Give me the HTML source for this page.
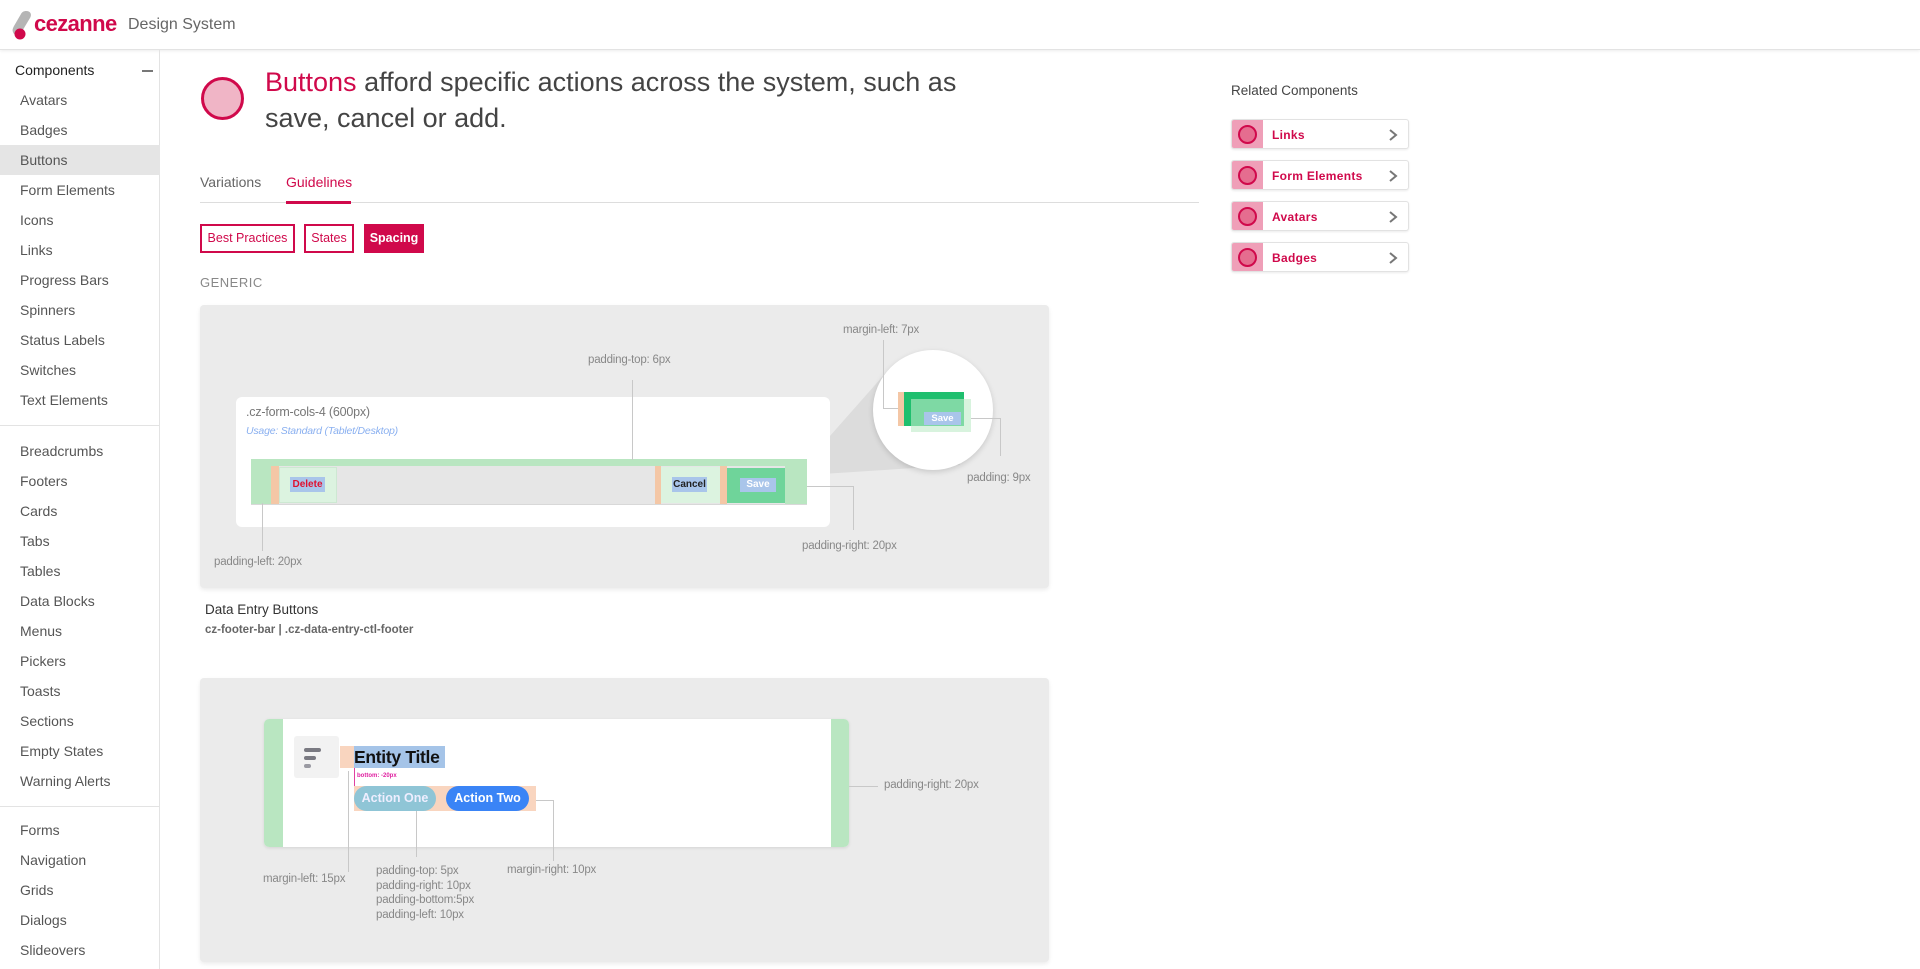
<!DOCTYPE html>
<html><head><meta charset="utf-8"><style>
*{margin:0;padding:0;box-sizing:border-box}
body{width:1920px;height:969px;overflow:hidden;background:#fff;font-family:"Liberation Sans",sans-serif;color:#444;position:relative}
.a{position:absolute}
.hdr{left:0;top:0;width:1920px;height:50px;border-bottom:1px solid #e3e3e3;box-shadow:0 1px 3px rgba(0,0,0,.08);background:#fff}
.side{left:0;top:50px;width:160px;height:919px;border-right:1px solid #e3e3e3}
.si{position:absolute;left:20px;font-size:14px;color:#555}
.sep{position:absolute;left:0;width:160px;height:1px;background:#e3e3e3}
.lbl{position:absolute;font-size:11.5px;color:#888;white-space:nowrap;letter-spacing:-.2px}
.ln{position:absolute;background:#c8c8c8}
.pill{position:absolute;top:224px;height:29px;border:2px solid #d0094b;color:#d0094b;font-size:12.5px;line-height:25px;text-align:center}
.rc{position:absolute;left:1231px;width:178px;height:30px;border:1px solid #e2e2e2;border-radius:3px;box-shadow:0 1px 2px rgba(0,0,0,.08);background:#fff;overflow:hidden}
.rc .l{position:absolute;left:0;top:0;width:31px;height:30px;background:#ef9fb8}
.rc .c{position:absolute;left:6px;top:5px;width:19px;height:19px;border-radius:50%;background:#e56d8f;border:2px solid #d0094b}
.rc .t{position:absolute;left:40px;top:8px;font-size:12px;color:#d0094b;font-weight:bold;letter-spacing:.3px}
.rc svg{position:absolute;left:155px;top:8px}
</style></head><body>
<div class="a hdr">
 <svg class="a" style="left:11px;top:10px" width="22" height="30" viewBox="0 0 22 30"><path d="M15 1 C20 1 21 5 19 8 L10 23 C8 26 3 26 2 22 C1 20 2 18 3 16 L10 4 C11 2 13 1 15 1Z" fill="#b5b5b5"/><circle cx="9" cy="24" r="5.5" fill="#d0094b"/></svg>
 <div class="a" style="left:34px;top:11px;font-size:22px;font-weight:bold;color:#d0094b;letter-spacing:-.6px">cezanne</div>
 <div class="a" style="left:128px;top:16px;font-size:16px;color:#666">Design System</div>
</div>
<div class="a side">
 <div class="a" style="left:15px;top:12px;font-size:14px;color:#222">Components</div>
 <div class="a" style="left:142px;top:20px;width:11px;height:2px;background:#777"></div>
 <div class="a" style="left:0;top:95px;width:160px;height:30px;background:#e5e5e5"></div>
 <div class="si" style="top:42px">Avatars</div>
 <div class="si" style="top:72px">Badges</div>
 <div class="si" style="top:102px">Buttons</div>
 <div class="si" style="top:132px">Form Elements</div>
 <div class="si" style="top:162px">Icons</div>
 <div class="si" style="top:192px">Links</div>
 <div class="si" style="top:222px">Progress Bars</div>
 <div class="si" style="top:252px">Spinners</div>
 <div class="si" style="top:282px">Status Labels</div>
 <div class="si" style="top:312px">Switches</div>
 <div class="si" style="top:342px">Text Elements</div>
 <div class="sep" style="top:375px"></div>
 <div class="si" style="top:393px">Breadcrumbs</div>
 <div class="si" style="top:423px">Footers</div>
 <div class="si" style="top:453px">Cards</div>
 <div class="si" style="top:483px">Tabs</div>
 <div class="si" style="top:513px">Tables</div>
 <div class="si" style="top:543px">Data Blocks</div>
 <div class="si" style="top:573px">Menus</div>
 <div class="si" style="top:603px">Pickers</div>
 <div class="si" style="top:633px">Toasts</div>
 <div class="si" style="top:663px">Sections</div>
 <div class="si" style="top:693px">Empty States</div>
 <div class="si" style="top:723px">Warning Alerts</div>
 <div class="sep" style="top:756px"></div>
 <div class="si" style="top:772px">Forms</div>
 <div class="si" style="top:802px">Navigation</div>
 <div class="si" style="top:832px">Grids</div>
 <div class="si" style="top:862px">Dialogs</div>
 <div class="si" style="top:892px">Slideovers</div>
</div>

<div class="a" style="left:201px;top:77px;width:43px;height:43px;border-radius:50%;background:#f0b5c6;border:3.5px solid #d0094b"></div>
<div class="a" style="left:265px;top:64px;width:720px;font-size:27px;line-height:36px;color:#444"><span style="color:#d0094b">Buttons</span> afford specific actions across the system, such as save, cancel or add.</div>

<div class="a" style="left:200px;top:174px;font-size:14px;color:#666">Variations</div>
<div class="a" style="left:286px;top:174px;font-size:14px;color:#d0094b">Guidelines</div>
<div class="a" style="left:200px;top:202px;width:999px;height:1px;background:#ddd"></div>
<div class="a" style="left:286px;top:201px;width:65px;height:3px;background:#d0094b"></div>

<div class="pill" style="left:200px;width:95px">Best Practices</div>
<div class="pill" style="left:304px;width:50px">States</div>
<div class="pill" style="left:364px;width:60px;background:#d0094b;color:#fff;font-weight:bold">Spacing</div>
<div class="a" style="left:200px;top:275px;font-size:13px;color:#888;letter-spacing:.5px">GENERIC</div>

<div class="a" style="left:200px;top:305px;width:849px;height:283px;background:#ebebeb;border-radius:4px;box-shadow:0 2px 4px rgba(0,0,0,.08)"></div>
<svg class="a" style="left:0;top:0" width="1100" height="600"><polygon points="807,462 890,368 915,380 960,465 807,475" fill="#dcdcdc"/></svg>
<div class="a" style="left:236px;top:397px;width:594px;height:130px;background:#fff;border-radius:6px"></div>
<div class="lbl" style="left:246px;top:405px;font-size:12.5px;color:#777">.cz-form-cols-4 (600px)</div>
<div class="lbl" style="left:246px;top:425px;font-size:10.5px;color:#8ab0f0;font-style:italic">Usage: Standard (Tablet/Desktop)</div>
<div class="a" style="left:251px;top:459px;width:556px;height:46px;background:#e6e6e6;border:1px solid #d8d8d8"></div>
<div class="a" style="left:251px;top:459px;width:556px;height:7px;background:#b9e6c1"></div>
<div class="a" style="left:251px;top:466px;width:20px;height:38px;background:#b9e6c1"></div>
<div class="a" style="left:271px;top:466px;width:8px;height:38px;background:#f4c7a6"></div>
<div class="a" style="left:279px;top:467px;width:58px;height:36px;background:#dcf3e0;border:1px solid #cde8d2"></div>
<div class="a" style="left:290px;top:477px;width:35px;height:15px;background:#a9c5ea;color:#e0102f;font-size:10px;font-weight:bold;text-align:center;line-height:15px">Delete</div>
<div class="a" style="left:655px;top:466px;width:6px;height:38px;background:#f4c7a6"></div>
<div class="a" style="left:661px;top:467px;width:59px;height:36px;background:#dcf3e0"></div>
<div class="a" style="left:672px;top:477px;width:35px;height:15px;background:#a9c5ea;color:#222;font-size:10px;font-weight:bold;text-align:center;line-height:15px">Cancel</div>
<div class="a" style="left:720px;top:466px;width:7px;height:38px;background:#f4c7a6"></div>
<div class="a" style="left:727px;top:468px;width:58px;height:35px;background:#6fd49a"></div>
<div class="a" style="left:740px;top:478px;width:36px;height:14px;background:#a9c5ea;color:#fff;font-size:10px;font-weight:bold;text-align:center;line-height:14px">Save</div>
<div class="a" style="left:785px;top:466px;width:22px;height:38px;background:#b9e6c1"></div>

<div class="a" style="left:873px;top:350px;width:120px;height:120px;border-radius:50%;background:#fff;box-shadow:0 2px 6px rgba(0,0,0,.15)"></div>
<div class="a" style="left:898px;top:392px;width:6px;height:34px;background:#f4c7a6"></div>
<div class="a" style="left:904px;top:392px;width:60px;height:34px;background:#1fbf6e"></div>
<div class="a" style="left:911px;top:399px;width:60px;height:33px;background:rgba(190,235,200,.6)"></div>
<div class="a" style="left:924px;top:412px;width:37px;height:13px;background:#a9c5ea;color:#fff;font-size:9.5px;font-weight:bold;text-align:center;line-height:13px">Save</div>

<div class="ln" style="left:632px;top:380px;width:1px;height:80px"></div>
<div class="lbl" style="left:588px;top:354px">padding-top: 6px</div>
<div class="ln" style="left:883px;top:340px;width:1px;height:68px"></div>
<div class="ln" style="left:883px;top:408px;width:15px;height:1px"></div>
<div class="lbl" style="left:843px;top:324px">margin-left: 7px</div>
<div class="ln" style="left:971px;top:418px;width:30px;height:1px"></div>
<div class="ln" style="left:1000px;top:418px;width:1px;height:38px"></div>
<div class="lbl" style="left:967px;top:472px">padding: 9px</div>
<div class="ln" style="left:807px;top:486px;width:46px;height:1px"></div>
<div class="ln" style="left:853px;top:486px;width:1px;height:44px"></div>
<div class="lbl" style="left:802px;top:540px">padding-right: 20px</div>
<div class="ln" style="left:262px;top:503px;width:1px;height:48px"></div>
<div class="lbl" style="left:214px;top:556px">padding-left: 20px</div>

<div class="a" style="left:205px;top:602px;font-size:13.5px;color:#333">Data Entry Buttons</div>
<div class="a" style="left:205px;top:624px;font-size:11.5px;color:#666;font-weight:bold">cz-footer-bar | .cz-data-entry-ctl-footer</div>

<div class="a" style="left:200px;top:678px;width:849px;height:284px;background:#ebebeb;border-radius:4px;box-shadow:0 2px 4px rgba(0,0,0,.08)"></div>
<div class="a" style="left:264px;top:719px;width:585px;height:128px;background:#fff;border-radius:5px;overflow:hidden;box-shadow:0 1px 3px rgba(0,0,0,.1)">
 <div class="a" style="left:0;top:0;width:19px;height:128px;background:#b9e6c1"></div>
 <div class="a" style="right:0;top:0;width:18px;height:128px;background:#b9e6c1"></div>
</div>
<div class="a" style="left:294px;top:736px;width:45px;height:42px;background:#f2f2f2;border-radius:3px"></div>
<div class="a" style="left:304px;top:748px;width:17px;height:4px;border-radius:2px;background:#7a7a82"></div>
<div class="a" style="left:304px;top:756px;width:12px;height:4px;border-radius:2px;background:#7a7a82"></div>
<div class="a" style="left:304px;top:764px;width:7px;height:4px;border-radius:2px;background:#9a9aa2"></div>
<div class="a" style="left:340px;top:746px;width:14px;height:22px;background:#f9d5bf"></div>
<div class="a" style="left:354px;top:746px;width:91px;height:22px;background:#a5c4e8;color:#111;font-size:17.5px;font-weight:bold;line-height:22px;letter-spacing:-.3px">Entity Title</div>
<div class="a" style="left:354px;top:768px;width:1px;height:18px;background:#e040a0"></div>
<div class="a" style="left:357px;top:773px;font-size:6px;color:#e020a0;font-weight:bold">bottom: -20px</div>
<div class="a" style="left:354px;top:786px;width:182px;height:25px;background:#f9d5bf"></div>
<div class="a" style="left:354px;top:786px;width:82px;height:25px;border-radius:13px;background:#8fc5d6;color:#eef;font-size:12.5px;font-weight:bold;text-align:center;line-height:25px">Action One</div>
<div class="a" style="left:446px;top:786px;width:83px;height:25px;border-radius:13px;background:#3a84f6;color:#fff;font-size:12.5px;font-weight:bold;text-align:center;line-height:25px">Action Two</div>

<div class="ln" style="left:348px;top:771px;width:1px;height:101px"></div>
<div class="lbl" style="left:263px;top:873px">margin-left: 15px</div>
<div class="ln" style="left:416px;top:811px;width:1px;height:46px"></div>
<div class="lbl" style="left:376px;top:864px;line-height:14.7px">padding-top: 5px<br>padding-right: 10px<br>padding-bottom:5px<br>padding-left: 10px</div>
<div class="ln" style="left:536px;top:800px;width:17px;height:1px"></div>
<div class="ln" style="left:553px;top:800px;width:1px;height:61px"></div>
<div class="lbl" style="left:507px;top:864px">margin-right: 10px</div>
<div class="ln" style="left:849px;top:786px;width:29px;height:1px"></div>
<div class="lbl" style="left:884px;top:779px">padding-right: 20px</div>

<div class="a" style="left:1231px;top:83px;font-size:13.5px;color:#444">Related Components</div>
<div class="rc" style="top:119px"><div class="l"></div><div class="c"></div><div class="t">Links</div><svg width="12" height="14" viewBox="0 0 12 14"><path d="M3 2 L9 7 L3 12" fill="none" stroke="#777" stroke-width="2"/></svg></div>
<div class="rc" style="top:160px"><div class="l"></div><div class="c"></div><div class="t">Form Elements</div><svg width="12" height="14" viewBox="0 0 12 14"><path d="M3 2 L9 7 L3 12" fill="none" stroke="#777" stroke-width="2"/></svg></div>
<div class="rc" style="top:201px"><div class="l"></div><div class="c"></div><div class="t">Avatars</div><svg width="12" height="14" viewBox="0 0 12 14"><path d="M3 2 L9 7 L3 12" fill="none" stroke="#777" stroke-width="2"/></svg></div>
<div class="rc" style="top:242px"><div class="l"></div><div class="c"></div><div class="t">Badges</div><svg width="12" height="14" viewBox="0 0 12 14"><path d="M3 2 L9 7 L3 12" fill="none" stroke="#777" stroke-width="2"/></svg></div>
</body></html>
